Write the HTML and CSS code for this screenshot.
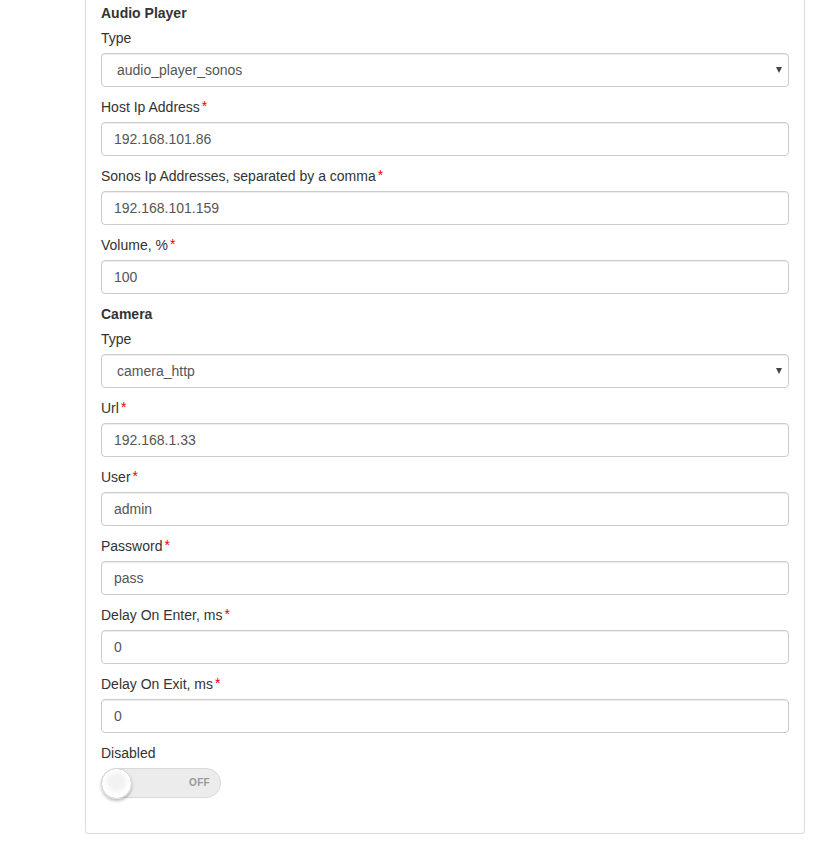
FILE: index.html
```html
<!DOCTYPE html>
<html>
<head>
<meta charset="utf-8">
<link rel="stylesheet" href="styles.css">
</head>
<body>
<div class="page">
  <div class="card">
    <div class="section-title">Audio Player</div>
    <div class="field">
      <label class="label">Type</label>
      <div class="select-wrap"><select class="control select"><option>audio_player_sonos</option></select></div>
    </div>
    <div class="field">
      <label class="label">Host Ip Address<span class="req">*</span></label>
      <input class="control" type="text" value="192.168.101.86">
    </div>
    <div class="field">
      <label class="label">Sonos Ip Addresses, separated by a comma<span class="req">*</span></label>
      <input class="control" type="text" value="192.168.101.159">
    </div>
    <div class="field">
      <label class="label">Volume, %<span class="req">*</span></label>
      <input class="control" type="text" value="100">
    </div>
    <div class="section-title">Camera</div>
    <div class="field">
      <label class="label">Type</label>
      <div class="select-wrap"><select class="control select"><option>camera_http</option></select></div>
    </div>
    <div class="field">
      <label class="label">Url<span class="req">*</span></label>
      <input class="control" type="text" value="192.168.1.33">
    </div>
    <div class="field">
      <label class="label">User<span class="req">*</span></label>
      <input class="control" type="text" value="admin">
    </div>
    <div class="field">
      <label class="label">Password<span class="req">*</span></label>
      <input class="control" type="text" value="pass">
    </div>
    <div class="field">
      <label class="label">Delay On Enter, ms<span class="req">*</span></label>
      <input class="control" type="text" value="0">
    </div>
    <div class="field">
      <label class="label">Delay On Exit, ms<span class="req">*</span></label>
      <input class="control" type="text" value="0">
    </div>
    <div class="field">
      <label class="label">Disabled</label>
      <div class="toggle">
        <span class="knob"></span>
        <span class="toggle-text">OFF</span>
      </div>
    </div>
  </div>
</div>
</body>
</html>
```

FILE: styles.css
```css
* { box-sizing: border-box; }
html, body { margin: 0; padding: 0; background: #fff; }
body {
  font-family: "Liberation Sans", Arial, sans-serif;
  font-size: 14px;
  line-height: 20px;
  color: #333;
}
.page {
  padding-left: 85px;
  width: 805px;
}
.card {
  width: 720px;
  border: 1px solid #ddd;
  border-top: none;
  border-radius: 0 0 4px 4px;
  box-shadow: 0 1px 1px rgba(0,0,0,0.05);
  padding: 3px 15px 35px 15px;
}
.section-title {
  font-weight: bold;
  height: 20px;
  margin-bottom: 5px;
}
.field {
  margin-bottom: 10px;
}
.field:last-child { margin-bottom: 0; }
.label {
  display: block;
  height: 20px;
  margin-bottom: 5px;
  font-weight: normal;
}
.req {
  color: #e00;
  margin-left: 2px;
  position: relative;
  top: -1px;
}
.control {
  display: block;
  width: 100%;
  height: 34px;
  padding: 6px 12px;
  border: 1px solid #ccc;
  border-radius: 4px;
  font-family: "Liberation Sans", Arial, sans-serif;
  font-size: 14px;
  line-height: 20px;
  color: #555;
  background: #fff;
  box-shadow: inset 0 1px 1px rgba(0,0,0,0.075);
  margin: 0;
  outline: none;
}
.select-wrap { position: relative; }
.select {
  appearance: none;
  -webkit-appearance: none;
  padding-left: 15px;
}
.select-wrap::after {
  content: "";
  position: absolute;
  right: 7px;
  top: 14px;
  border-left: 3.5px solid transparent;
  border-right: 3.5px solid transparent;
  border-top: 6px solid #444;
}
.toggle {
  position: relative;
  width: 120px;
  height: 30px;
  border: 1px solid #d9d9d9;
  border-radius: 15px;
  background: #ececec;
  display: flex;
  align-items: center;
  justify-content: flex-end;
  padding-right: 10px;
}
.knob {
  position: absolute;
  left: -1px;
  top: -1px;
  width: 31px;
  height: 31px;
  border-radius: 50%;
  background: radial-gradient(circle at 50% 45%, #f2f2f2 0, #f2f2f2 30%, #fff 60%);
  border: 1px solid #d6d6d6;
  box-shadow: 0 2px 3px rgba(0,0,0,0.25);
}
.toggle-text {
  font-size: 10px;
  font-weight: bold;
  color: #999;
  letter-spacing: 0.3px;
}
```
